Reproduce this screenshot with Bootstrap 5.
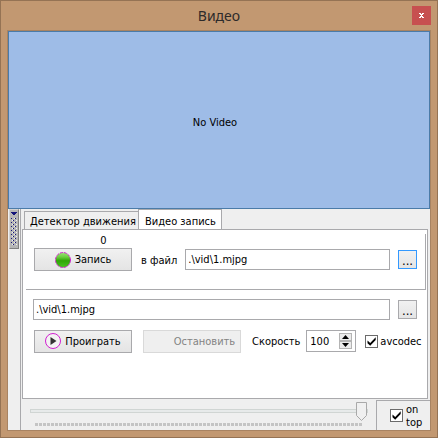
<!DOCTYPE html>
<html lang="ru">
<head>
<meta charset="utf-8">
<meta name="viewport" content="width=device-width, initial-scale=1">
<title>Видео</title>
<link href="https://cdn.jsdelivr.net/npm/bootstrap@5.3.0/dist/css/bootstrap.min.css" rel="stylesheet">
<style>
:root { --line: #a9a9ac; --face: #efefef; }
body { font-family: "DejaVu Sans Condensed", "DejaVu Sans", sans-serif; font-size: 11px; line-height: 13px; color: #000; }
.win { background: #c29871; border: 1px solid #957354; padding: 0 6px 6px; }
.titlebar { height: 29px; }
.titlebar h1 { font: 14px/20px "Noto Sans", sans-serif; color: #2d2a2a; }
.btn-x { width: 19px; height: 19px; background: #c75050; right: 0; top: 5px; }
.client { background: var(--face); border: 1px solid #a88362; }
.video { height: 178px; background: #9ebce7; border: 1px solid #4b7ba8; padding-top: 4px; padding-right: 8px; }
.side { width: 13px; border-right: 1px solid var(--line); }
.grip { width: 10px; height: 40px; margin-left: 1px; background: #b6b6b6; border: 1px solid #d2d2d2; border-right-color: #808080; border-bottom-color: #808080; }
.grip svg { display: block; }
.tabs { margin: 0 0 -1px 3px; height: 21px; }
.tabs .nav-link { border: 1px solid var(--line); border-radius: 0; color: #000; background: var(--face); padding: 2px 5px 0; height: 19px; white-space: nowrap; }
.tabs .nav-link.active { background: #fff; border-bottom: 0; height: 21px; padding: 2px 6px 0; margin-left: -1px; width: 84px; }
.tabs .first-tab { width: 115px; }
.page { background: #fff; border: 1px solid var(--line); margin: 0 2px 0 1px; padding: 3px 1px 0 3px; height: 170px; }
.rec { border: solid var(--line); border-width: 0 1px 1px 0; height: 56px; padding: 0 8px; }
.counter { width: 15px; margin: 1px 0 0 62px; text-align: center; }
.rec-row { height: 23px; margin-top: 1px; }
.rec-row label { margin: 2px 8px 0 9px; }
.btn-w { font-size: 11px; line-height: 13px; border: 1px solid var(--line); border-radius: 0; padding: 0; background: linear-gradient(#f1f1f1, #e4e4e4); color: #000; height: 23px; width: 98px; white-space: nowrap; }
.btn-w:disabled { border-color: #d9d9d9; background: #efefef; color: #838383; opacity: 1; padding-left: 25px; }
.btn-dots { width: 19px; height: 19px; padding-top: 1px; font-size: 13px; line-height: 13px; }
.btn-dots.hot { border-color: #3399ff; }
.field { font-size: 11px; line-height: 13px; border: 1px solid var(--line); border-radius: 0; padding: 0 2px; height: 21px; min-width: 0; color: #000; }
.file-row { padding: 0 9px 0 7px; margin-top: 9px; height: 21px; }
.play-row { padding-left: 8px; margin-top: 9px; height: 24px; }
.play-row .btn-w { margin-right: 11px; }
.spin { width: 50px; height: 22px; border: 1px solid var(--line); padding-right: 3px; margin: 0 9px 0 6px; background: #fff; }
.spin input { border: 0; width: 30px; height: 18px; padding: 0 3px; font-size: 11px; color: #000; outline: 0; min-width: 0; }
.arrow { width: 13px; height: 8px; border: 1px solid #b4b4b4; background: #ebebeb; padding: 0; line-height: 0; }
.arrow svg { display: block; margin: auto; }
.tick { appearance: none; width: 13px; height: 13px; margin: 0; flex: none; border: 1px solid #6b6b6b; background: #fff; }
.tick:checked { background: #fff url("data:image/svg+xml,%3Csvg xmlns='http://www.w3.org/2000/svg' viewBox='0 0 11 11'%3E%3Cpath d='M1.5 4.5v2.8l2.7 2.4L9.7 4V1.3L4.2 6.9z'/%3E%3C/svg%3E"); }
.avc { margin-left: 2px; }
.seek { padding: 3px 8px 0 9px; }
.seek input { appearance: none; display: block; width: 100%; height: 18px; margin: 0; background: transparent; }
.seek input::-webkit-slider-runnable-track { height: 4px; background: #e7eaea; border: 1px solid #d0d5d3; }
.seek input::-webkit-slider-thumb { appearance: none; width: 11px; height: 19px; margin-top: -8px; background: url("data:image/svg+xml,%3Csvg xmlns='http://www.w3.org/2000/svg' viewBox='0 0 11 19'%3E%3Cpath d='M.5.5h10v13l-5 5-5-5z' fill='%23f0f0f0' stroke='%23a9a9a9'/%3E%3C/svg%3E"); }
.marks { height: 3px; margin: 3px 5px 0; background: repeating-linear-gradient(90deg, #c4c4c4 0 3px, #efefef 3px 4px); }
.ontop { width: 54px; height: 30px; border: solid var(--line); border-width: 1px 0 0 1px; padding-left: 13px; gap: 3px; margin-top: 1px; }
</style>
<script src="https://cdn.jsdelivr.net/npm/bootstrap@5.3.0/dist/js/bootstrap.bundle.min.js"></script>
</head>
<body>
<div class="win min-vh-100 d-flex flex-column">
  <header class="titlebar position-relative d-flex align-items-center justify-content-center">
    <h1 class="m-0">Видео</h1>
    <button type="button" class="btn-x border-0 p-0 position-absolute d-flex align-items-center justify-content-center" aria-label="Закрыть">
      <svg width="5" height="5" viewBox="0 0 5 5" fill="#fff" shape-rendering="crispEdges"><path d="M0 0h2v1h1V0h2v1H4v1H3v1h1v1h1v1H3V4H2v1H0V4h1V3h1V2H1V1H0z"/></svg>
    </button>
  </header>
  <main class="client flex-grow-1 d-flex flex-column">
    <div class="video d-flex align-items-center justify-content-center">No Video</div>
    <div class="d-flex flex-grow-1">
      <div class="side flex-shrink-0">
        <div class="grip">
          <svg width="8" height="38" viewBox="0 0 8 38" shape-rendering="crispEdges">
            <defs><pattern id="dots" width="4" height="4" patternUnits="userSpaceOnUse"><path d="M1 0h1v1H1zM3 2h1v1H3z" fill="#15157a"/><path d="M0 0h1v1H0zM2 2h1v1H2z" fill="#f2f2f2"/></pattern></defs>
            <path d="M1 2h6v1H6v1H5v1H3V4H2V3H1z" fill="#15157a"/>
            <path d="M1 8h6v28H1z" fill="url(#dots)"/>
          </svg>
        </div>
      </div>
      <div class="flex-grow-1 d-flex flex-column">
        <ul class="nav tabs align-items-end flex-nowrap" role="tablist">
          <li class="nav-item"><button type="button" class="nav-link first-tab" role="tab">Детектор движения</button></li>
          <li class="nav-item"><button type="button" class="nav-link active" role="tab" aria-selected="true">Видео запись</button></li>
        </ul>
        <section class="page">
          <div class="rec">
            <div class="counter">0</div>
            <div class="rec-row d-flex align-items-center">
              <button type="button" class="btn-w d-flex align-items-center justify-content-center gap-1 flex-shrink-0">
                <svg width="16" height="16" viewBox="0 0 16 16"><defs><linearGradient id="g" x2="0" y2="1"><stop stop-color="#a0e07d"/><stop offset=".3" stop-color="#6ccf40"/><stop offset=".55" stop-color="#2fa505"/><stop offset="1" stop-color="#47c51e"/></linearGradient></defs><circle cx="8" cy="8" r="7.5" fill="url(#g)" stroke="#d11fd0" stroke-dasharray="3 1"/></svg>
                Запись
              </button>
              <label for="recfile" class="text-nowrap">в файл</label>
              <input id="recfile" class="field flex-grow-1" value=".\vid\1.mjpg">
              <button type="button" class="btn-w btn-dots hot ms-2 flex-shrink-0" aria-label="Выбрать файл записи">...</button>
            </div>
          </div>
          <div class="file-row d-flex align-items-center">
            <input class="field flex-grow-1" aria-label="Файл" value=".\vid\1.mjpg">
            <button type="button" class="btn-w btn-dots ms-2 flex-shrink-0" aria-label="Выбрать файл">...</button>
          </div>
          <div class="play-row d-flex align-items-center">
            <button type="button" class="btn-w d-flex align-items-center justify-content-center gap-1 flex-shrink-0">
              <svg width="16" height="16" viewBox="0 0 16 16"><circle cx="8" cy="8" r="7.5" fill="#f3f3f3" stroke="#d11fd0"/><path d="M5.500 4v8l6-4z" fill="#333"/></svg>
              Проиграть
            </button>
            <button type="button" class="btn-w flex-shrink-0" disabled>Остановить</button>
            <label for="speed">Скорость</label>
            <div class="spin d-flex align-items-center justify-content-between flex-shrink-0">
              <input id="speed" value="100">
              <div class="d-flex flex-column">
                <button type="button" class="arrow" aria-label="Больше"><svg width="7" height="4" viewBox="0 0 7 4"><path d="M0 4h7L3.500 0z"/></svg></button>
                <button type="button" class="arrow" aria-label="Меньше"><svg width="7" height="4" viewBox="0 0 7 4"><path d="M0 0h7L3.500 4z"/></svg></button>
              </div>
            </div>
            <input class="tick" type="checkbox" id="avc" checked>
            <label for="avc" class="avc">avcodec</label>
          </div>
        </section>
        <div class="d-flex">
          <div class="seek flex-grow-1">
            <input type="range" min="0" max="100" value="100" aria-label="Позиция">
            <div class="marks"></div>
          </div>
          <div class="ontop d-flex align-items-center flex-shrink-0">
            <input class="tick" type="checkbox" id="top" checked>
            <label for="top">on<br>top</label>
          </div>
        </div>
      </div>
    </div>
  </main>
</div>
</body>
</html>
